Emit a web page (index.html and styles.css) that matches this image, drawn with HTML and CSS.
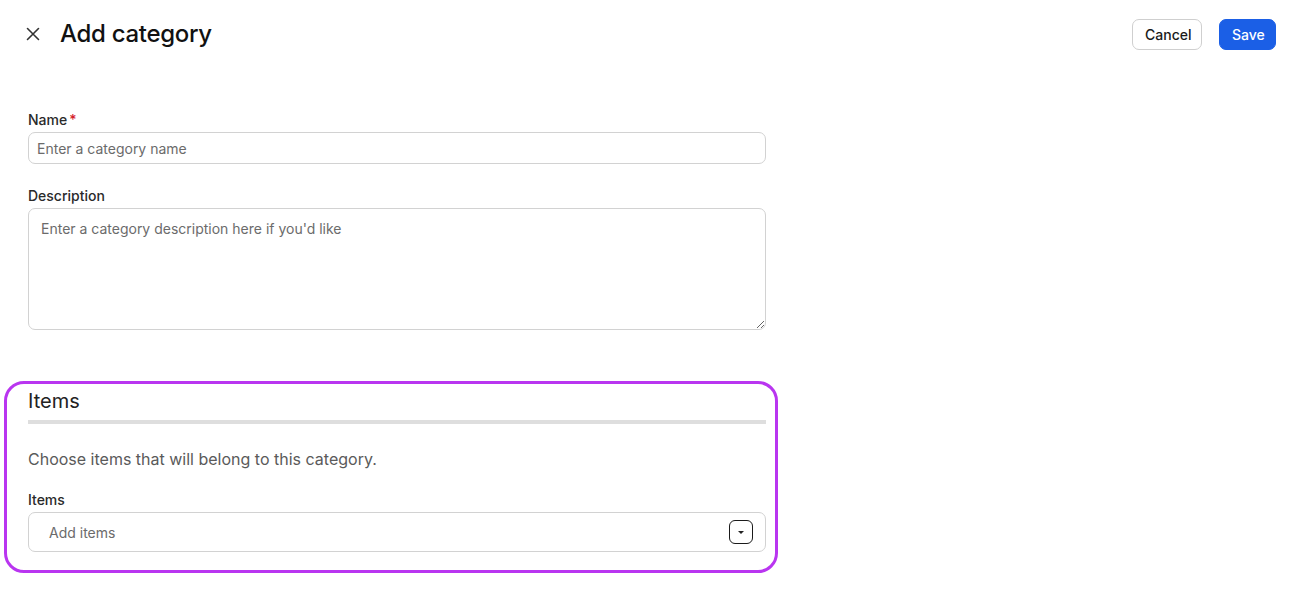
FILE: index.html
```html
<!DOCTYPE html>
<html lang="en">
<head>
<meta charset="utf-8">
<title>Add category</title>
<link rel="stylesheet" href="styles.css">
</head>
<body>
<header class="topbar">
  <div class="title-group">
    <button class="close-btn" aria-label="Close">
      <svg width="14" height="14" viewBox="0 0 14 14"><path d="M1.5 1.5 L12.5 12.5 M12.5 1.5 L1.5 12.5" stroke="#333" stroke-width="1.6" stroke-linecap="round" fill="none"/></svg>
    </button>
    <h1 class="title">Add category</h1>
  </div>
  <div class="actions">
    <button class="btn btn-secondary">Cancel</button>
    <button class="btn btn-primary">Save</button>
  </div>
</header>

<main class="form">
  <div class="field">
    <label class="label">Name<span class="req">*</span></label>
    <input class="input" type="text" placeholder="Enter a category name">
  </div>
  <div class="field field-desc">
    <label class="label">Description</label>
    <textarea class="textarea" placeholder="Enter a category description here if you'd like"></textarea>
  </div>

  <section class="items-section">
    <h2 class="section-title">Items</h2>
    <div class="rule"></div>
    <p class="section-text">Choose items that will belong to this category.</p>
    <label class="label">Items</label>
    <div class="select">
      <span class="select-placeholder">Add items</span>
      <span class="select-toggle">
        <svg width="8" height="5" viewBox="0 0 8 5"><path d="M1 1 L7 1 L4 4 Z" fill="#222"/></svg>
      </span>
    </div>
  </section>
</main>
</body>
</html>
```

FILE: styles.css
```css
* { box-sizing: border-box; }
body {
  margin: 0;
  font-family: Inter, "Noto Sans", "Liberation Sans", sans-serif;
  color: #1a1a1a;
  background: #fff;
}
.topbar {
  display: flex;
  justify-content: space-between;
  align-items: center;
  padding: 18px 28px 0 25px;
}
.title-group {
  display: flex;
  align-items: center;
  gap: 19px;
}
.close-btn {
  width: 16px;
  height: 16px;
  padding: 0;
  border: 0;
  background: none;
  display: flex;
  align-items: center;
  justify-content: center;
}
.title {
  margin: 0;
  font-size: 24px;
  line-height: 32px;
  font-weight: 500;
  color: #111;
  letter-spacing: -0.3px;
}
.actions {
  display: flex;
  gap: 17px;
}
.btn {
  height: 31px;
  padding: 0 12px;
  border-radius: 7px;
  font-family: inherit;
  font-size: 14px;
  font-weight: 500;
}
.btn-secondary {
  width: 70px;
  background: #fff;
  border: 1px solid #cfcfcf;
  color: #1a1a1a;
}
.btn-primary {
  width: 57px;
  background: #1b5fe6;
  border: 1px solid #1b5fe6;
  color: #fff;
}
.form {
  width: 766px;
  padding: 60px 0 40px 28px;
}
.field {
  display: flex;
  flex-direction: column;
}
.field-desc { margin-top: 22px; }
.label {
  font-size: 14px;
  line-height: 20px;
  font-weight: 500;
  color: #2a2a2a;
  margin-bottom: 2px;
}
.req { color: #d4202a; margin-left: 2px; }
.input {
  height: 32px;
  border: 1px solid #d2d2d2;
  border-radius: 7px;
  padding: 0 8px;
  font-family: inherit;
  font-size: 14px;
  color: #222;
}
.textarea {
  height: 122px;
  border: 1px solid #d2d2d2;
  border-radius: 7px;
  padding: 10px 12px;
  font-family: inherit;
  font-size: 14px;
  line-height: 20px;
  color: #222;
  resize: vertical;
}
.input::placeholder, .textarea::placeholder { color: #6b6b6b; opacity: 1; }
.items-section {
  margin: 51px -12px 0 -24px;
  padding: 5px 9px 18px 21px;
  border: 3px solid #b935f0;
  border-radius: 20px;
  display: flex;
  flex-direction: column;
}
.section-title {
  margin: 0;
  font-size: 20px;
  line-height: 24px;
  font-weight: 400;
  color: #222;
}
.rule {
  height: 4px;
  background: #dedede;
  margin-top: 7px;
}
.section-text {
  margin: 23px 0 19px;
  font-size: 16px;
  line-height: 24px;
  color: #5a5a5a;
}
.select {
  height: 40px;
  border: 1px solid #d2d2d2;
  border-radius: 7px;
  display: flex;
  align-items: center;
  justify-content: space-between;
  padding: 0 12px 0 20px;
}
.select-placeholder {
  font-size: 14px;
  color: #6b6b6b;
}
.select-toggle {
  width: 24px;
  height: 24px;
  border: 1px solid #1a1a1a;
  border-radius: 6px;
  display: flex;
  align-items: center;
  justify-content: center;
}
```
